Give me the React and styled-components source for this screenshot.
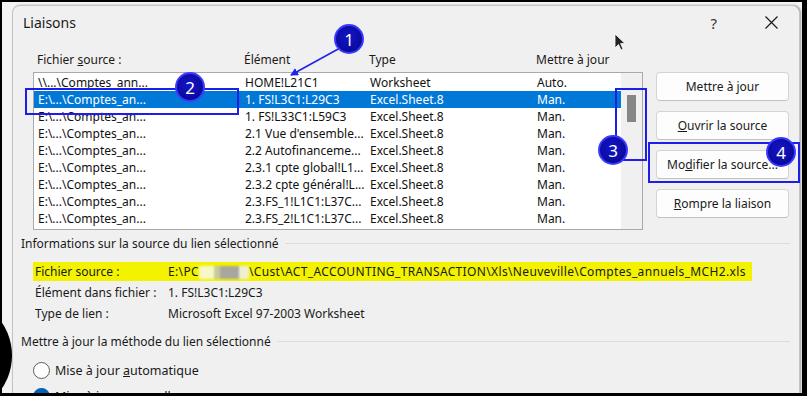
import React from 'react';
import styled, { createGlobalStyle } from 'styled-components';

const GlobalStyle = createGlobalStyle`
    html, body {
        margin: 0;
        padding: 0;
        background: #000;
    }
    * {
        box-sizing: border-box;
    }
`;

const ROWS = [
    ['\\\\...\\Comptes_ann...', 'HOME!L21C1', 'Worksheet', 'Auto.'],
    ['E:\\...\\Comptes_an...', '1. FS!L3C1:L29C3', 'Excel.Sheet.8', 'Man.'],
    ['E:\\...\\Comptes_an...', '1. FS!L33C1:L59C3', 'Excel.Sheet.8', 'Man.'],
    ['E:\\...\\Comptes_an...', "2.1 Vue d'ensemble...", 'Excel.Sheet.8', 'Man.'],
    ['E:\\...\\Comptes_an...', '2.2 Autofinanceme...', 'Excel.Sheet.8', 'Man.'],
    ['E:\\...\\Comptes_an...', '2.3.1 cpte global!L1...', 'Excel.Sheet.8', 'Man.'],
    ['E:\\...\\Comptes_an...', '2.3.2 cpte général!L...', 'Excel.Sheet.8', 'Man.'],
    ['E:\\...\\Comptes_an...', '2.3.FS_1!L1C1:L37C...', 'Excel.Sheet.8', 'Man.'],
    ['E:\\...\\Comptes_an...', '2.3.FS_2!L1C1:L37C...', 'Excel.Sheet.8', 'Man.'],
];

const COLS = [4, 211, 336, 503];

const App = () => {
    return (
        <STYLE_PAGE>
            <GlobalStyle />
            <STYLE_SCREEN>
                <STYLE_DIALOG>
                    <STYLE_TITLEBAR>
                        <span>Liaisons</span>
                        <STYLE_CONTROLS>
                            <span>?</span>
                            <svg width="13" height="13" viewBox="0 0 13 13">
                                <path d="M0.5 0.5 L12.5 12.5 M12.5 0.5 L0.5 12.5" stroke="#1a1a1a" strokeWidth="1.2" fill="none" />
                            </svg>
                        </STYLE_CONTROLS>
                    </STYLE_TITLEBAR>

                    <STYLE_BODY>
                        <STYLE_MAIN>
                            <STYLE_LISTCOL>
                                <STYLE_HEADERS>
                                    <STYLE_CELL $x={COLS[0]}>Fichier <u>s</u>ource :</STYLE_CELL>
                                    <STYLE_CELL $x={COLS[1]}>Élément</STYLE_CELL>
                                    <STYLE_CELL $x={COLS[2]}>Type</STYLE_CELL>
                                    <STYLE_CELL $x={COLS[3]}>Mettre à jour</STYLE_CELL>
                                </STYLE_HEADERS>
                                <STYLE_LIST>
                                    <STYLE_ROWS>
                                        {ROWS.map((r, i) => (
                                            <STYLE_ROW key={i} $selected={i === 1}>
                                                {r.map((t, j) => (
                                                    <STYLE_CELL key={j} $x={COLS[j]}>{t}</STYLE_CELL>
                                                ))}
                                            </STYLE_ROW>
                                        ))}
                                    </STYLE_ROWS>
                                    <STYLE_SCROLL>
                                        <STYLE_THUMB />
                                    </STYLE_SCROLL>
                                </STYLE_LIST>
                            </STYLE_LISTCOL>

                            <STYLE_BUTTONS>
                                <STYLE_BUTTON>Mettre à jour</STYLE_BUTTON>
                                <STYLE_BUTTON><u>O</u>uvrir la source</STYLE_BUTTON>
                                <STYLE_BUTTON>Mo<u>d</u>ifier la source...</STYLE_BUTTON>
                                <STYLE_BUTTON><u>R</u>ompre la liaison</STYLE_BUTTON>
                            </STYLE_BUTTONS>
                        </STYLE_MAIN>

                        <STYLE_GROUPTITLE>Informations sur la source du lien sélectionné</STYLE_GROUPTITLE>

                        <STYLE_INFO>
                            <STYLE_INFOROW $highlight>
                                <STYLE_LABEL>Fichier source :</STYLE_LABEL>
                                <STYLE_PATH>E:\PC<STYLE_BLUR />\Cust\ACT_ACCOUNTING_TRANSACTION\Xls\Neuveville\Comptes_annuels_MCH2.xls</STYLE_PATH>
                            </STYLE_INFOROW>
                            <STYLE_INFOROW>
                                <STYLE_LABEL>Élément dans fichier :</STYLE_LABEL>
                                <span>1. FS!L3C1:L29C3</span>
                            </STYLE_INFOROW>
                            <STYLE_INFOROW>
                                <STYLE_LABEL>Type de lien :</STYLE_LABEL>
                                <span>Microsoft Excel 97-2003 Worksheet</span>
                            </STYLE_INFOROW>
                        </STYLE_INFO>

                        <STYLE_GROUPTITLE $top={10}>Mettre à jour la méthode du lien sélectionné</STYLE_GROUPTITLE>

                        <STYLE_RADIOS>
                            <STYLE_RADIO>
                                <STYLE_DOT />
                                <span>Mise à jour <u>a</u>utomatique</span>
                            </STYLE_RADIO>
                            <STYLE_RADIO>
                                <STYLE_DOT $checked />
                                <span>Mise à jour <u>m</u>anuelle</span>
                            </STYLE_RADIO>
                        </STYLE_RADIOS>
                    </STYLE_BODY>
                </STYLE_DIALOG>
            </STYLE_SCREEN>

            {/* annotations drawn over the screenshot */}
            <STYLE_BIGBLOB />
            <STYLE_BOX $x={25} $y={88} $w={214} $h={27} />
            <STYLE_BOX $x={615} $y={88} $w={32} $h={73} />
            <STYLE_BOX $x={648} $y={142} $w={152} $h={41} />
            <STYLE_ARROW width="807" height="396" viewBox="0 0 807 396">
                <defs>
                    <marker id="head" markerWidth="8" markerHeight="8" refX="7" refY="4" orient="auto" markerUnits="userSpaceOnUse">
                        <path d="M0 0 L8 4 L0 8 Z" fill="#2222ee" />
                    </marker>
                </defs>
                <line x1="340" y1="48" x2="291" y2="75" stroke="#2222ee" strokeWidth="1.6" markerEnd="url(#head)" />
            </STYLE_ARROW>
            <STYLE_BADGE $x={349} $y={39}>1</STYLE_BADGE>
            <STYLE_BADGE $x={190} $y={87}>2</STYLE_BADGE>
            <STYLE_BADGE $x={613} $y={150}>3</STYLE_BADGE>
            <STYLE_BADGE $x={781} $y={152}>4</STYLE_BADGE>
            <STYLE_CURSOR width="12" height="19" viewBox="0 0 12 19">
                <path d="M1 1 L1 15 L4.5 11.5 L7 17 L9 16 L6.6 10.6 L11 10.6 Z" fill="#222" stroke="#fff" strokeWidth="0.8" />
            </STYLE_CURSOR>
        </STYLE_PAGE>
    );
};

const STYLE_PAGE = styled.div`
    position: relative;
    width: 807px;
    height: 396px;
    overflow: hidden;
    background: #000;
    padding: 2px 5px 3px 2px;
    font-family: "Segoe UI", "Noto Sans", "Liberation Sans", sans-serif;
    font-size: 12px;
    color: #1a1a1a;
`;

const STYLE_SCREEN = styled.div`
    height: 100%;
    background: #f4f4f4;
    padding: 3px 2px 0 10px;
    overflow: hidden;
`;

const STYLE_DIALOG = styled.div`
    width: 788px;
    height: 420px;
    background: #f0f0f0;
    border: 1px solid #c4c4c4;
    border-radius: 8px 8px 0 0;
    box-shadow: 1px 0 2px rgba(0, 0, 0, 0.35);
    display: flex;
    flex-direction: column;
`;

const STYLE_TITLEBAR = styled.div`
    height: 33px;
    display: flex;
    align-items: center;
    justify-content: space-between;
    padding: 0 21px 0 10px;
    font-size: 14px;
    color: #1a1a1a;
`;

const STYLE_CONTROLS = styled.div`
    display: flex;
    align-items: center;
    gap: 48px;
    font-size: 15px;

    span{
        color: #333;
    }
`;

const STYLE_BODY = styled.div`
    padding: 0 9px 0 8px;
    display: flex;
    flex-direction: column;
`;

const STYLE_MAIN = styled.div`
    display: flex;
    margin-left: 12px;
    margin-top: 12px;
`;

const STYLE_LISTCOL = styled.div`
    width: 610px;
    display: flex;
    flex-direction: column;
`;

const STYLE_HEADERS = styled.div`
    position: relative;
    height: 17px;
    margin-bottom: 4px;
`;

const STYLE_CELL = styled.span`
    position: absolute;
    left: ${p => p.$x}px;
    top: 0;
    line-height: 17px;
    white-space: nowrap;
`;

const STYLE_LIST = styled.div`
    height: 158px;
    background: #fff;
    border: 1px solid #a9a9a9;
    display: flex;
`;

const STYLE_ROWS = styled.div`
    flex: 1;
    padding-top: 1px;
`;

const STYLE_ROW = styled.div`
    position: relative;
    height: 17px;
    background: ${p => p.$selected ? '#0078d7' : 'transparent'};
    color: ${p => p.$selected ? '#fff' : '#111'};
`;

const STYLE_SCROLL = styled.div`
    width: 21px;
    background: #f0f0f0;
    padding: 22px 0 0 6px;
`;

const STYLE_THUMB = styled.div`
    width: 9px;
    height: 27px;
    background: #868686;
`;

const STYLE_BUTTONS = styled.div`
    margin-left: 13px;
    padding-top: 21px;
    width: 133px;
    display: flex;
    flex-direction: column;
    gap: 10px;
`;

const STYLE_BUTTON = styled.div`
    height: 29px;
    display: flex;
    align-items: center;
    justify-content: center;
    background: #fdfdfd;
    border: 1px solid #d4d4d4;
    border-bottom-color: #c2c2c2;
    border-radius: 4px;
    color: #1a1a1a;
`;

const STYLE_GROUPTITLE = styled.div`
    display: flex;
    align-items: center;
    height: 17px;
    margin-top: ${p => p.$top ?? 5}px;
    white-space: nowrap;

    &::after{
        content: '';
        flex: 1;
        height: 1px;
        margin-left: 6px;
        background: #dcdcdc;
    }
`;

const STYLE_INFO = styled.div`
    margin: 10px 0 0 12px;
    display: flex;
    flex-direction: column;
    gap: 2px;
`;

const STYLE_INFOROW = styled.div`
    display: flex;
    align-items: center;
    height: 19px;
    width: 719px;
    padding-left: 2px;
    background: ${p => p.$highlight ? '#f3f300' : 'transparent'};
    white-space: nowrap;
`;

const STYLE_LABEL = styled.span`
    width: 133px;
    flex-shrink: 0;
`;

const STYLE_PATH = styled.span`
    letter-spacing: 0.35px;
`;

const STYLE_BLUR = styled.span`
    display: inline-block;
    vertical-align: middle;
    width: 50px;
    height: 13px;
    background: linear-gradient(90deg, #f7f7c8 0 30%, #c9c99a 30% 42%, #a7a7a0 42% 80%, #f0f0d0 80%);
    filter: blur(1.2px);
`;

const STYLE_RADIOS = styled.div`
    margin: 12px 0 0 12px;
    display: flex;
    flex-direction: column;
    gap: 9px;
`;

const STYLE_RADIO = styled.div`
    display: flex;
    align-items: center;
    height: 17px;
    gap: 5px;
    font-size: 12.5px;
`;

const STYLE_DOT = styled.span`
    width: 17px;
    height: 17px;
    border-radius: 50%;
    border: ${p => p.$checked ? '5px solid #005fb8' : '1px solid #5c5c5c'};
    background: #fff;
`;

const STYLE_BIGBLOB = styled.div`
    position: absolute;
    left: -107px;
    top: 296px;
    width: 119px;
    height: 119px;
    border-radius: 50%;
    background: #000;
`;

const STYLE_BOX = styled.div`
    position: absolute;
    left: ${p => p.$x}px;
    top: ${p => p.$y}px;
    width: ${p => p.$w}px;
    height: ${p => p.$h}px;
    border: 2px solid #1e1ee8;
`;

const STYLE_ARROW = styled.svg`
    position: absolute;
    left: 0;
    top: 0;
    pointer-events: none;
`;

const STYLE_BADGE = styled.div`
    position: absolute;
    left: ${p => p.$x - 15}px;
    top: ${p => p.$y - 15}px;
    width: 30px;
    height: 30px;
    border-radius: 50%;
    border: 2px solid #3a3aff;
    background: radial-gradient(circle at 45% 40%, #1414c8, #06068c);
    color: #fff;
    font-family: "Noto Sans", "Liberation Sans", sans-serif;
    font-size: 17px;
    display: flex;
    align-items: center;
    justify-content: center;
`;

const STYLE_CURSOR = styled.svg`
    position: absolute;
    left: 614px;
    top: 33px;
`;

export default App;
